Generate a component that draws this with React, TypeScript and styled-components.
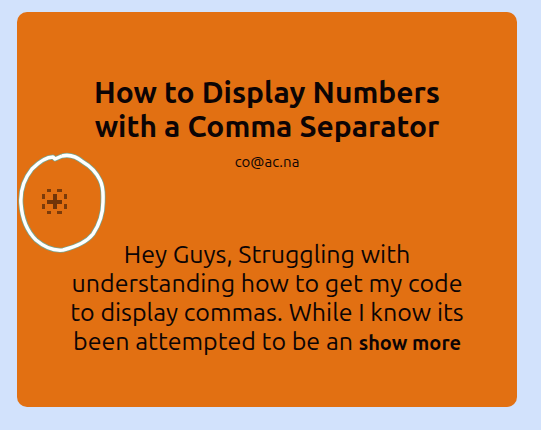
import React from "react";
import styled, { createGlobalStyle } from "styled-components";

const GlobalStyle = createGlobalStyle`
  * { box-sizing: border-box; }
  body {
    margin: 0;
    background: #d2e2fc;
    color: #0c0405;
    font-family: Ubuntu, "Noto Sans", sans-serif;
  }
`;

const Page = styled.main`
  padding: 12px 24px 23px 17px;
`;

const Card = styled.article`
  position: relative;
  display: flex;
  flex-direction: column;
  padding: 63px 40px 51px;
  border-radius: 10px;
  background: #e27012;
  text-align: center;
`;

const Title = styled.h1`
  margin: 0;
  font-size: 30px;
  font-weight: 700;
  line-height: 34px;
  white-space: nowrap;
`;

const Author = styled.p`
  margin: 9px 0 0;
  font-size: 15px;
  line-height: 20px;
`;

const AddButton = styled.button`
  align-self: flex-start;
  display: flex;
  margin: 17px 0 0 -15px;
  padding: 0;
  border: 0;
  background: none;
  color: #7c3b0a;
  cursor: pointer;
`;

const Body = styled.p`
  margin: 26px 0 0;
  font-size: 25px;
  font-weight: 450;
  line-height: 29px;
  white-space: nowrap;
`;

const More = styled.button`
  padding: 0;
  border: 0;
  background: none;
  color: inherit;
  font: inherit;
  font-size: 20px;
  font-weight: 700;
  line-height: 20px;
  cursor: pointer;
`;

const Ring = styled.svg`
  position: absolute;
  top: 140px;
  left: 0;
  pointer-events: none;
`;

const ringPath =
  "M45 4 C53 2 60 5 66 10 C73 14 79 20 83 28 C87 36 86 43 86 50 C86 61 82 73 76 82 C69 91 58 95 46 98 C36 99 26 94 19 88 C10 79 5 66 4 52 C3 39 7 27 15 17 C22 10 30 5 36 5 L38 7 L45 4";

export default function App() {
  return (
    <>
      <GlobalStyle />
      <Page>
        <Card>
          <Title>
            How to Display Numbers
            <br />
            with a Comma Separator
          </Title>
          <Author>co@ac.na</Author>
          <AddButton type="button" aria-label="Add">
            <svg width="25" height="25" viewBox="0 0 25 25" fill="currentColor" aria-hidden="true">
              <path d="M5 0h4v3H5zM15 0h5v3h-5zM5 22h4v3H5zM15 22h5v3h-5zM0 5h3v5H0zM0 15h3v5H0zM22 5h3v5h-3zM22 15h3v5h-3z" />
              <path d="M11 5h4v6h5v4h-5v5h-4v-5H5v-4h6z" fill="#713509" />
            </svg>
          </AddButton>
          <Body>
            Hey Guys, Struggling with
            <br />
            understanding how to get my code
            <br />
            to display commas. While I know its
            <br />
            been attempted to be an <More type="button">show more</More>
          </Body>
          <Ring width="90" height="103" viewBox="0 0 90 103" fill="none" aria-hidden="true">
            <path d={ringPath} stroke="#78a590" strokeWidth="5" strokeLinejoin="round" />
            <path d={ringPath} stroke="#ffffff" strokeWidth="3.5" strokeLinejoin="round" />
          </Ring>
        </Card>
      </Page>
    </>
  );
}
